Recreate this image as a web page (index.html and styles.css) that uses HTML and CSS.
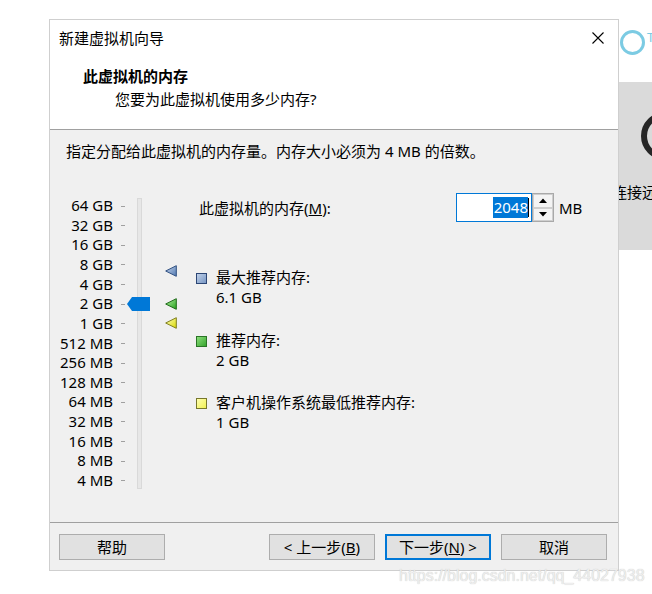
FILE: index.html
```html
<!DOCTYPE html>
<html lang="zh-CN">
<head>
<meta charset="utf-8">
<title>新建虚拟机向导</title>
<link rel="stylesheet" href="styles.css">
</head>
<body>
<div class="desk">
  <div class="dialog">
    <div class="titlebar">
      <span class="title">新建虚拟机向导</span>
      <svg class="close" width="12" height="12" viewBox="0 0 12 12"><path d="M0.5 0.5 L11.5 11.5 M11.5 0.5 L0.5 11.5" stroke="#000" stroke-width="1.1" fill="none"/></svg>
    </div>
    <div class="header">
      <div class="h-title">此虚拟机的内存</div>
      <div class="h-sub">您要为此虚拟机使用多少内存?</div>
    </div>
    <div class="content">
      <div class="desc">指定分配给此虚拟机的内存量。内存大小必须为 4 MB 的倍数。</div>
      <div class="main">
        <div class="scale">
          <div class="row"><span class="lbl">64 GB</span><span class="tick"></span></div>
          <div class="row"><span class="lbl">32 GB</span><span class="tick"></span></div>
          <div class="row"><span class="lbl">16 GB</span><span class="tick"></span></div>
          <div class="row"><span class="lbl">8 GB</span><span class="tick"></span></div>
          <div class="row"><span class="lbl">4 GB</span><span class="tick"></span></div>
          <div class="row"><span class="lbl">2 GB</span><span class="tick"></span></div>
          <div class="row"><span class="lbl">1 GB</span><span class="tick"></span></div>
          <div class="row"><span class="lbl">512 MB</span><span class="tick"></span></div>
          <div class="row"><span class="lbl">256 MB</span><span class="tick"></span></div>
          <div class="row"><span class="lbl">128 MB</span><span class="tick"></span></div>
          <div class="row"><span class="lbl">64 MB</span><span class="tick"></span></div>
          <div class="row"><span class="lbl">32 MB</span><span class="tick"></span></div>
          <div class="row"><span class="lbl">16 MB</span><span class="tick"></span></div>
          <div class="row"><span class="lbl">8 MB</span><span class="tick"></span></div>
          <div class="row"><span class="lbl">4 MB</span><span class="tick"></span></div>
          <div class="track"></div>
          <div class="thumb"></div>
          <svg class="mk mk-max" width="12" height="12" viewBox="0 0 12 12">
            <defs><linearGradient id="gb" x1="0" y1="0" x2="1" y2="1"><stop offset="0" stop-color="#c9d8ee"/><stop offset="1" stop-color="#4f77b0"/></linearGradient></defs>
            <polygon points="0.7,6 11.3,0.7 11.3,11.3" fill="url(#gb)" stroke="#2f4f80" stroke-width="1"/>
          </svg>
          <svg class="mk mk-rec" width="12" height="12" viewBox="0 0 12 12">
            <defs><linearGradient id="gg" x1="0" y1="0" x2="1" y2="1"><stop offset="0" stop-color="#b6f0a6"/><stop offset="1" stop-color="#23a11a"/></linearGradient></defs>
            <polygon points="0.7,6 11.3,0.7 11.3,11.3" fill="url(#gg)" stroke="#1d6a17" stroke-width="1"/>
          </svg>
          <svg class="mk mk-min" width="12" height="12" viewBox="0 0 12 12">
            <defs><linearGradient id="gy" x1="0" y1="0" x2="1" y2="1"><stop offset="0" stop-color="#ffffc0"/><stop offset="1" stop-color="#d9d900"/></linearGradient></defs>
            <polygon points="0.7,6 11.3,0.7 11.3,11.3" fill="url(#gy)" stroke="#7e7e1e" stroke-width="1"/>
          </svg>
        </div>
        <div class="info">
          <div class="memrow">
            <span class="memlabel">此虚拟机的内存(<u>M</u>):</span>
            <div class="spinbox">
              <div class="input"><span class="sel">2048</span><span class="caret"></span></div>
              <div class="spin">
                <div class="sbtn"><svg width="8" height="5" viewBox="0 0 8 5"><polygon points="0,5 4,0.5 8,5" fill="#000"/></svg></div>
                <div class="sbtn"><svg width="8" height="5" viewBox="0 0 8 5"><polygon points="0,0 8,0 4,4.5" fill="#000"/></svg></div>
              </div>
            </div>
            <span class="unit">MB</span>
          </div>
          <div class="legend">
            <div class="item">
              <svg class="sq" width="11" height="11" viewBox="0 0 11 11">
                <defs><linearGradient id="sb" x1="0" y1="0" x2="1" y2="1"><stop offset="0" stop-color="#c3d3ea"/><stop offset="1" stop-color="#7594c2"/></linearGradient></defs>
                <rect x="0.5" y="0.5" width="10" height="10" fill="url(#sb)" stroke="#2c4675"/>
              </svg>
              <div class="itxt"><div>最大推荐内存:</div><div>6.1 GB</div></div>
            </div>
            <div class="item">
              <svg class="sq" width="11" height="11" viewBox="0 0 11 11">
                <defs><linearGradient id="sg" x1="0" y1="0" x2="1" y2="1"><stop offset="0" stop-color="#8fe07e"/><stop offset="1" stop-color="#32a22a"/></linearGradient></defs>
                <rect x="0.5" y="0.5" width="10" height="10" fill="url(#sg)" stroke="#2a7426"/>
              </svg>
              <div class="itxt"><div>推荐内存:</div><div>2 GB</div></div>
            </div>
            <div class="item">
              <svg class="sq" width="11" height="11" viewBox="0 0 11 11">
                <defs><linearGradient id="sy" x1="0" y1="0" x2="1" y2="1"><stop offset="0" stop-color="#ffffb4"/><stop offset="1" stop-color="#f0f050"/></linearGradient></defs>
                <rect x="0.5" y="0.5" width="10" height="10" fill="url(#sy)" stroke="#77772c"/>
              </svg>
              <div class="itxt"><div>客户机操作系统最低推荐内存:</div><div>1 GB</div></div>
            </div>
          </div>
        </div>
      </div>
    </div>
    <div class="footer">
      <button class="btn">帮助</button>
      <div class="spacer"></div>
      <button class="btn">&lt; 上一步(<u>B</u>)</button>
      <button class="btn btn-default">下一步(<u>N</u>) &gt;</button>
      <button class="btn">取消</button>
    </div>
  </div>
  <div class="side">
    <div class="side-top"><span class="ring"></span><span class="side-t">T</span></div>
    <div class="side-panel">
      <svg class="side-icon" width="33" height="48" viewBox="0 0 33 48"><circle cx="46" cy="24" r="21" fill="none" stroke="#262626" stroke-width="6"/></svg>
      <div class="side-text">连接远程</div>
    </div>
  </div>
</div>
<div class="watermark">https://blog.csdn.net/qq_44027938</div>
</body>
</html>
```
FILE: styles.css
```css
html, body {
  margin: 0;
  padding: 0;
  background: #ffffff;
}
body {
  width: 652px;
  height: 594px;
  overflow: hidden;
  position: relative;
  font-family: "Noto Sans", "Noto Sans CJK SC", sans-serif;
  font-size: 15px;
  color: #000;
}
.desk {
  display: flex;
  align-items: flex-start;
  padding-top: 19px;
  padding-left: 49px;
}
.dialog {
  width: 570px;
  height: 552px;
  box-sizing: border-box;
  border: 1px solid #cfcfcf;
  background: #ffffff;
  display: flex;
  flex-direction: column;
  flex-shrink: 0;
}
.titlebar {
  height: 38px;
  box-sizing: border-box;
  padding: 8px 14px 0 9px;
  display: flex;
  justify-content: space-between;
  align-items: flex-start;
  line-height: 20px;
}
.close {
  display: block;
  margin-top: 4px;
}
.header {
  height: 72px;
  box-sizing: border-box;
  padding: 8px 0 0 33px;
  border-bottom: 1px solid #a0a0a0;
  line-height: 20px;
}
.h-title {
  font-weight: bold;
}
.h-sub {
  margin-top: 3px;
  padding-left: 32px;
}
.content {
  height: 392px;
  background: #f0f0f0;
  box-sizing: border-box;
  padding-top: 11px;
}
.desc {
  line-height: 20px;
  padding-left: 16px;
}
.main {
  display: flex;
  margin-top: 32px;
}
.scale {
  position: relative;
  width: 146px;
  padding-top: 3.2px;
  flex-shrink: 0;
}
.row {
  display: flex;
  align-items: center;
  height: 19.64px;
  line-height: 19.64px;
}
.lbl {
  width: 63px;
  text-align: right;
  white-space: nowrap;
}
.tick {
  width: 4px;
  height: 1px;
  margin-left: 8px;
  background: #a0a0a0;
}
.track {
  position: absolute;
  left: 87px;
  top: 5px;
  width: 5px;
  height: 291px;
  box-sizing: border-box;
  border: 1px solid #d9d9d9;
  background: #e7e7e7;
}
.thumb {
  position: absolute;
  left: 77px;
  top: 104px;
  width: 23px;
  height: 14px;
  background: #0078d7;
  clip-path: polygon(0 50%, 5px 0, 100% 0, 100% 100%, 5px 100%);
}
.mk {
  position: absolute;
  left: 115px;
  display: block;
}
.mk-max { top: 72px; }
.mk-rec { top: 105px; }
.mk-min { top: 124px; }
.info {
  flex: 1;
}
.memrow {
  display: flex;
  align-items: center;
  height: 29px;
  padding-left: 3px;
}
.memlabel {
  width: 257px;
  white-space: nowrap;
  line-height: 20px;
}
.spinbox {
  display: flex;
  height: 29px;
}
.input {
  width: 76px;
  height: 29px;
  box-sizing: border-box;
  border: 1px solid #0078d7;
  background: #ffffff;
  display: flex;
  align-items: center;
  justify-content: flex-end;
  padding-right: 2px;
}
.sel {
  background: #0078d7;
  color: #ffffff;
  line-height: 21px;
  padding: 0 0 0 1px;
}
.caret {
  width: 1px;
  height: 19px;
  background: #000;
}
.spin {
  width: 22px;
  height: 29px;
  box-sizing: border-box;
  border: 1px solid #a9a9a9;
  display: flex;
  flex-direction: column;
  background: #f0f0f0;
}
.sbtn {
  flex: 1;
  box-sizing: border-box;
  border: 1px solid #cfcfcf;
  background: #f4f4f4;
  display: flex;
  align-items: center;
  justify-content: center;
}
.sbtn svg {
  display: block;
}
.unit {
  margin-left: 5px;
  line-height: 20px;
}
.legend {
  margin-top: 45px;
  display: flex;
  flex-direction: column;
  gap: 22.5px;
}
.item {
  display: flex;
  align-items: flex-start;
}
.sq {
  display: block;
  margin-top: 6px;
  flex-shrink: 0;
}
.itxt {
  margin-left: 9px;
  line-height: 20px;
}
.footer {
  flex: 1;
  background: #f0f0f0;
  border-top: 1px solid #a0a0a0;
  display: flex;
  align-items: flex-start;
  gap: 10px;
  padding: 11px 11px 0 9px;
}
.spacer {
  flex: 1;
}
.btn {
  width: 106px;
  height: 26px;
  box-sizing: border-box;
  border: 1px solid #adadad;
  background: #e1e1e1;
  font-family: "Noto Sans", "Noto Sans CJK SC", sans-serif;
  font-size: 15px;
  color: #000;
  padding: 0;
  line-height: 22px;
  margin: 0;
}
.btn-default {
  border: 2px solid #0078d7;
}
.side {
  width: 33px;
  overflow: hidden;
  flex-shrink: 0;
  height: 260px;
}
.side-top {
  display: flex;
  align-items: flex-start;
  margin-top: 11px;
  margin-left: 1px;
  height: 25px;
}
.ring {
  display: block;
  width: 25px;
  height: 25px;
  box-sizing: border-box;
  border: 3px solid #7ccbe3;
  border-radius: 50%;
  flex-shrink: 0;
}
.side-t {
  color: #7ccbe3;
  font-size: 13px;
  line-height: 14px;
  margin-left: 2px;
}
.side-panel {
  margin-top: 27px;
  height: 168px;
  background: #dadada;
  overflow: hidden;
  padding-top: 30px;
  box-sizing: border-box;
}
.side-icon {
  display: block;
}
.side-text {
  margin-top: 22px;
  margin-left: -7px;
  line-height: 20px;
  white-space: nowrap;
}
.watermark {
  position: absolute;
  left: 399px;
  top: 566px;
  font-family: "Liberation Sans", Arial, sans-serif;
  font-size: 16px;
  line-height: 20px;
  color: #eeeeee;
  text-shadow: 0 0 1px #bdbdbd;
  white-space: nowrap;
}
```
